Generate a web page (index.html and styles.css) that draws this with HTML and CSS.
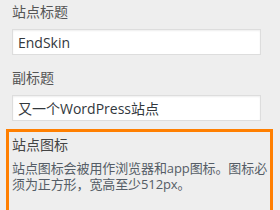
FILE: index.html
```html
<!DOCTYPE html>
<html lang="zh-CN">
<head>
<meta charset="utf-8">
<link rel="stylesheet" href="styles.css">
</head>
<body>
<div class="panel">
  <div class="field">
    <label class="label">站点标题</label>
    <input class="input" type="text" value="EndSkin">
  </div>
  <div class="field">
    <label class="label">副标题</label>
    <input class="input" type="text" value="又一个WordPress站点">
  </div>
  <div class="highlight">
    <div class="title">站点图标</div>
    <p class="desc">站点图标会被用作浏览器和app图标。图标必须为正方形，宽高至少512px。</p>
  </div>
</div>
</body>
</html>
```
FILE: styles.css
```css
html, body {
  margin: 0;
  padding: 0;
  background: #eeeeee;
  height: 100%;
  overflow: hidden;
}
body {
  font-family: "Open Sans", "Noto Sans CJK SC", sans-serif;
  color: #555d66;
}
.panel {
  padding: 2px 19px 0 12px;
}
.field {
  margin-bottom: 13px;
}
.label {
  display: block;
  font-size: 14px;
  line-height: 20px;
  color: #555;
  margin-bottom: 7px;
}
.input {
  display: block;
  box-sizing: border-box;
  width: 100%;
  height: 26px;
  margin: 0;
  padding: 0 5px;
  border: 1px solid #dddddd;
  box-shadow: inset 0 1px 2px rgba(0,0,0,0.07);
  background: #fff;
  font-family: "Open Sans", "Noto Sans CJK SC", sans-serif;
  font-size: 14px;
  color: #32373c;
  outline: none;
}
.highlight {
  margin: -5px -12px 0 -6px;
  border: 3px solid #ff7f00;
  border-bottom: none;
  padding: 3px 0 40px 3px;
}
.title {
  font-size: 14px;
  line-height: 20px;
  color: #444;
}
.desc {
  margin: 5px 0 0 0;
  font-size: 13px;
  line-height: 16px;
  letter-spacing: -0.1px;
  color: #555d66;
}
```
